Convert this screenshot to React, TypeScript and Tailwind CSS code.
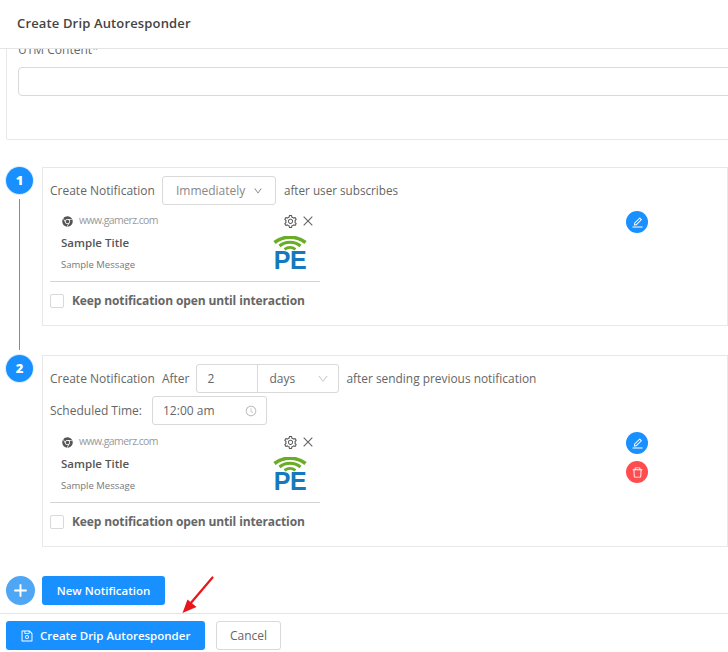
import React from "react";
import {
  AiFillChrome,
  AiOutlineClockCircle,
  AiOutlineClose,
  AiOutlineDelete,
  AiOutlineDown,
  AiOutlineEdit,
  AiOutlinePlus,
  AiOutlineSave,
  AiOutlineSetting,
} from "react-icons/ai";

function Logo() {
  return (
    <div className="flex flex-col items-center w-[34px]">
      <svg width="34" height="15" viewBox="0 0 34 15" fill="none" stroke="#68ad25">
        <path d="M1.5 6.5C10 -0.5 24 -0.5 32.5 6.5" strokeWidth="3.6" />
        <path d="M6.5 10C12.5 5 21.5 5 27.5 10" strokeWidth="3.2" />
        <path d="M11.5 13.4C15 10.8 19 10.8 22.5 13.4" strokeWidth="2.8" />
      </svg>
      <span className="text-[25px] leading-[19px] font-bold text-[#1479bd] tracking-[-0.5px] font-['Liberation_Sans',sans-serif]">
        PE
      </span>
    </div>
  );
}

function Preview() {
  return (
    <div className="w-[270px]">
      <div className="h-[73px] border-b border-[#d4d4d4] pl-[11px] pr-[5px] relative">
        <div className="flex items-center h-[24px]">
          <AiFillChrome className="text-[#555] text-[13px]" />
          <span className="ml-[5px] text-[10.5px] tracking-[-0.6px] text-[#999]">www.gamerz.com</span>
          <AiOutlineSetting className="ml-auto text-[#555] text-[15px]" />
          <AiOutlineClose className="ml-[3px] text-[#666] text-[14px]" />
        </div>
        <div className="flex justify-between pr-[8px]">
          <div>
            <div className="mt-[1px] text-[11.5px] leading-[18px] font-semibold text-[#555]">Sample Title</div>
            <div className="mt-[6px] text-[9.5px] leading-[14px] text-[#777]">Sample Message</div>
          </div>
          <div className="mt-[3px]">
            <Logo />
          </div>
        </div>
      </div>
      <label className="flex items-center mt-[12px] h-[14px]">
        <span className="w-[14px] h-[14px] border border-[#d9d9d9] rounded-[2px] bg-white" />
        <span className="ml-[8px] text-[12px] tracking-[-0.12px] font-bold text-[#666]">
          Keep notification open until interaction
        </span>
      </label>
    </div>
  );
}

function ActionCircle({ danger, children }: { danger?: boolean; children: React.ReactNode }) {
  return (
    <div
      className={
        danger
          ? "w-[22px] h-[22px] rounded-full bg-[#ff4d4f] text-white flex items-center justify-center text-[13px]"
          : "w-[22px] h-[22px] rounded-full bg-[#1890ff] text-white flex items-center justify-center text-[13px]"
      }
    >
      {children}
    </div>
  );
}

function Circle({ n, line }: { n: number; line?: boolean }) {
  return (
    <div className="w-[36px] shrink-0 flex flex-col items-start">
      <div className="w-[27px] h-[27px] rounded-full bg-[#1890ff] text-white text-[13px] font-extrabold flex items-center justify-center shadow-[0_0_0_1px_#d8ecff]">
        {n}
      </div>
      {line ? <div className="ml-[13px] mt-[5px] -mb-[24px] w-[1px] flex-1 bg-[#00c2d8]" /> : null}
    </div>
  );
}

export default function App() {
  return (
    <div className="w-[728px] h-[652px] overflow-hidden flex flex-col bg-white text-[#666] font-['Open_Sans','Noto_Sans',sans-serif] relative">
      <header className="h-[49px] shrink-0 border-b border-[#e4e4e4] pl-[17px] flex items-center">
        <h1 className="text-[13px] tracking-[0.15px] font-semibold text-[#444]">Create Drip Autoresponder</h1>
      </header>

      <main className="flex-1 min-h-0 overflow-hidden pl-[6px]">
        <section className="w-[800px] h-[121px] -mt-[30px] border border-[#e8e8e8] rounded-[2px] px-[11px]">
          <div className="text-[12px] leading-[18px] mt-[21px] text-[#666]">UTM Content*</div>
          <div className="mt-[8px] h-[29px] border border-[#d9d9d9] rounded-[4px] bg-white" />
        </section>

        <div className="flex mt-[27px] mb-[29px]">
          <Circle n={1} line />
          <div className="w-[760px] h-[159px] border border-[#e8e8e8] pl-[7px] pt-[8px]">
            <div className="flex items-center h-[29px] text-[12px]">
              <span>Create Notification</span>
              <div className="ml-[7px] w-[114px] h-[29px] border border-[#d9d9d9] rounded-[3px] flex items-center pl-[13px] text-[12px] text-[#888]">
                Immediately
                <AiOutlineDown className="ml-[8px] text-[10px] text-[#777]" />
              </div>
              <span className="ml-[8px] text-[11.7px]">after user subscribes</span>
            </div>
            <div className="flex mt-[4px]">
              <Preview />
              <div className="ml-[306px] mt-[2px]">
                <ActionCircle>
                  <AiOutlineEdit />
                </ActionCircle>
              </div>
            </div>
          </div>
        </div>

        <div className="flex">
          <Circle n={2} />
          <div className="w-[760px] h-[192px] border border-[#e8e8e8] pl-[7px] pt-[8px]">
            <div className="flex items-center h-[29px] text-[12px]">
              <span>Create Notification</span>
              <span className="ml-[7px]">After</span>
              <div className="ml-[7px] w-[143px] h-[29px] border border-[#d9d9d9] rounded-[3px] flex items-center text-[12px]">
                <span className="w-[61px] h-full border-r border-[#d9d9d9] pl-[10px] flex items-center">2</span>
                <span className="pl-[11px]">days</span>
                <AiOutlineDown className="ml-auto mr-[9px] text-[12px] text-[#ccc]" />
              </div>
              <span className="ml-[7px] text-[11.9px]">after sending previous notification</span>
            </div>
            <div className="flex items-center h-[29px] mt-[3px] text-[12px]">
              <span>Scheduled Time:</span>
              <div className="ml-[10px] w-[115px] h-[29px] border border-[#d9d9d9] rounded-[3px] flex items-center pl-[10px] pr-[9px]">
                12:00 am
                <AiOutlineClockCircle className="ml-auto text-[12px] text-[#bbb]" />
              </div>
            </div>
            <div className="flex mt-[5px]">
              <Preview />
              <div className="ml-[306px] mt-[2px] flex flex-col gap-[7px]">
                <ActionCircle>
                  <AiOutlineEdit />
                </ActionCircle>
                <ActionCircle danger>
                  <AiOutlineDelete />
                </ActionCircle>
              </div>
            </div>
          </div>
        </div>

        <div className="flex items-start mt-[29px]">
          <div className="w-[29px] h-[29px] rounded-full bg-[#4ea6f5] text-white flex items-center justify-center text-[17px]">
            <AiOutlinePlus className="stroke-[40px]" />
          </div>
          <button className="ml-[7px] w-[123px] h-[29px] rounded-[3px] bg-[#1890ff] text-white text-[11.5px] font-semibold">
            New Notification
          </button>
        </div>
      </main>

      <footer className="h-[39px] shrink-0 border-t border-[#e4e4e4] pl-[6px] pt-[7px] flex items-start">
        <button className="w-[199px] h-[29px] rounded-[3px] bg-[#1890ff] text-white text-[11.5px] font-semibold flex items-center pl-[14px]">
          <AiOutlineSave className="text-[14px] mr-[6px]" />
          Create Drip Autoresponder
        </button>
        <button className="ml-[11px] w-[65px] h-[29px] rounded-[3px] border border-[#d9d9d9] bg-white text-[12px] text-[#666]">
          Cancel
        </button>
      </footer>

      <svg className="absolute left-[178px] top-[574px]" width="40" height="42" viewBox="0 0 40 42" fill="none">
        <path d="M34.5 3.5L12 30" stroke="#e8161b" strokeWidth="2.2" strokeLinecap="round" />
        <path d="M4.5 39L9.5 25.5L18.5 33Z" fill="#e8161b" />
      </svg>
    </div>
  );
}
